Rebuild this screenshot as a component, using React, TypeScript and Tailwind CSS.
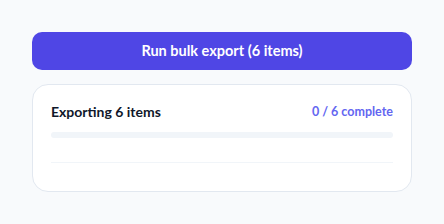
import React from "react";

// Bulk export panel: trigger button + progress card for the queued items.

const items: string[] = [];
const total = 6;

export default function App() {
  const done = items.length;
  const pct = total ? (done / total) * 100 : 0;

  return (
    <div
      className="min-h-screen bg-[#f8fafc] p-8"
      style={{ fontFamily: "Lato, 'Noto Sans', sans-serif" }}
    >
      <div className="flex flex-col gap-[14px]">
        <button
          type="button"
          className="h-[38px] w-full rounded-[10px] bg-[#4f46e5] text-[14.5px] font-bold text-white"
        >
          Run bulk export ({total} items)
        </button>

        <div className="rounded-[16px] border border-[#e2e8f0] bg-white px-[18px] pb-[28px] pt-[17px]">
          <div className="flex items-center justify-between">
            <span className="text-[14px] font-bold leading-5 text-[#0f172a]">
              Exporting {total} items
            </span>
            <span className="text-[12.5px] font-bold leading-5 text-[#6366f1]">
              {done} / {total} complete
            </span>
          </div>
          <div className="mt-[10px] h-[6px] w-full overflow-hidden rounded-full bg-[#f1f5f9]">
            <div className="h-full rounded-full bg-[#6366f1]" style={{ width: `${pct}%` }} />
          </div>
          <ul className="mt-6 border-t border-[#f1f5f9]">
            {items.map((item) => (
              <li key={item}>{item}</li>
            ))}
          </ul>
        </div>
      </div>
    </div>
  );
}
